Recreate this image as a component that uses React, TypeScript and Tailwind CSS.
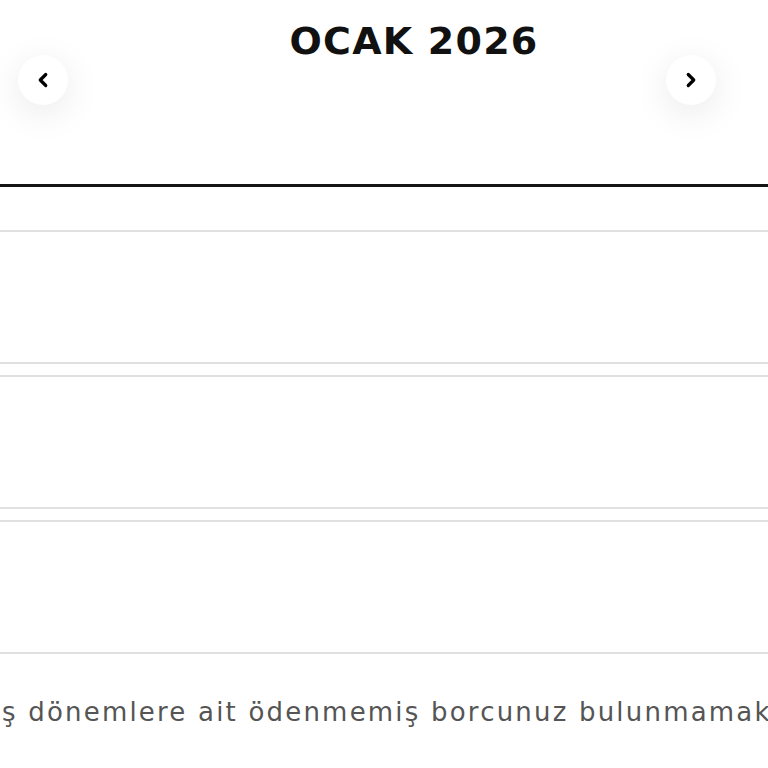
import { ChevronLeft, ChevronRight } from "lucide-react";

function NavButton({ dir }: { dir: "prev" | "next" }) {
  return (
    <button
      type="button"
      className="mt-[55px] flex h-[50px] w-[50px] items-center justify-center rounded-full bg-white text-black shadow-[0_8px_36px_rgba(0,0,0,0.09)]"
    >
      {dir === "prev" ? (
        <ChevronLeft size={22} strokeWidth={3.5} />
      ) : (
        <ChevronRight size={22} strokeWidth={3.5} />
      )}
    </button>
  );
}

function Row() {
  return <div className="h-[134px] border-y-2 border-[#e0e0e0]" />;
}

export default function App() {
  return (
    <div className="h-[768px] w-[768px] overflow-hidden bg-white font-['DejaVu_Sans',sans-serif]">
      <div className="flex h-[184px] items-start justify-between pl-[18px] pr-[52px]">
        <NavButton dir="prev" />
        <h1 className="mt-[19px] pl-[94px] text-[38px] font-bold leading-[44px] tracking-[1.2px] text-[#111]">
          OCAK 2026
        </h1>
        <NavButton dir="next" />
      </div>
      <div className="h-[3px] bg-[#151515]" />
      <div className="mt-[43px] flex flex-col gap-[11px]">
        <Row />
        <Row />
        <Row />
      </div>
      <p className="mt-[43px] whitespace-nowrap pl-[2px] text-[26px] leading-[30px] tracking-[2.2px] text-[#555]">
        ş dönemlere ait ödenmemiş borcunuz bulunmamaktadır.
      </p>
    </div>
  );
}
